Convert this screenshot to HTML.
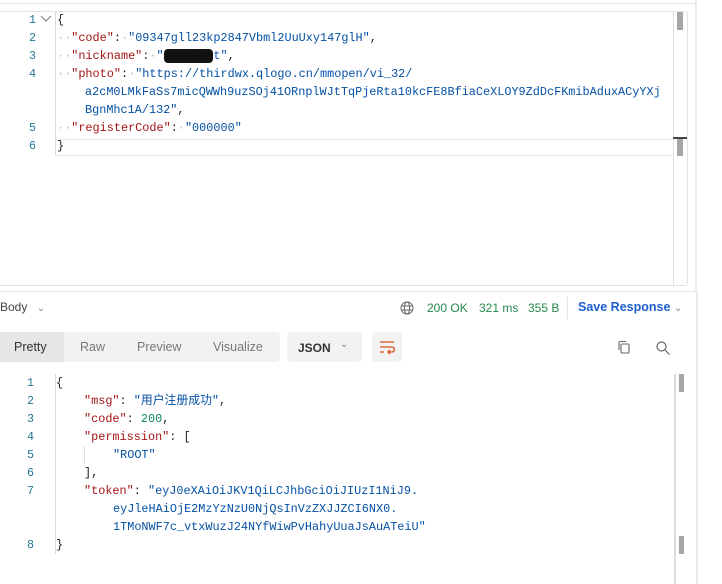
<!DOCTYPE html>
<html><head><meta charset="utf-8"><style>
*{margin:0;padding:0;box-sizing:border-box}
body{width:722px;height:584px;background:#fff;position:relative;overflow:hidden;font-family:"Liberation Sans","Noto Sans CJK SC",sans-serif}
.a{position:absolute}
.c{position:absolute;font-family:"Liberation Mono","Noto Sans CJK SC",monospace;font-size:11.85px;white-space:pre;line-height:18px;color:#222}
.n{position:absolute;font-family:"Liberation Mono",monospace;font-size:11.7px;color:#237893;width:36px;text-align:right;line-height:18px}
.k{color:#a31515}.s{color:#0451a5}.g{color:#098658}.d{color:#bbb}
</style></head><body>
<div class="a" style="left:0;top:3px;width:695px;height:1px;background:#e8e8e8"></div>
<div class="a" style="left:695px;top:0;width:2px;height:292px;background:#ebebeb"></div>
<div class="a" style="left:0;top:11px;width:688px;height:275px;border:1px solid #e2e2e2;border-left:none;border-radius:0 3px 3px 0"></div>
<div class="a" style="left:673px;top:12px;width:1px;height:273px;background:#ddd"></div>
<div class="a" style="left:677px;top:12px;width:6px;height:18px;background:#a6a6a6"></div>
<div class="a" style="left:677px;top:139px;width:6px;height:17px;background:#a6a6a6"></div>
<div class="a" style="left:673px;top:137px;width:14px;height:2px;background:#444"></div>
<div class="a" style="left:56px;top:139px;width:617px;height:17px;border-top:1px solid #e8e8e8;border-bottom:1px solid #e8e8e8"></div>
<div class="a" style="left:55px;top:12px;width:1px;height:143px;background:#d8d8d8"></div>
<div class="a" style="left:0;top:291px;width:695px;height:1px;background:#e8e8e8"></div>

<div class="n" style="top:11px">1</div><div class="n" style="top:29px">2</div><div class="n" style="top:47px">3</div><div class="n" style="top:65px">4</div><div class="n" style="top:119px">5</div><div class="n" style="top:137px">6</div>
<svg class="a" style="left:40px;top:15px" width="12" height="8"><path d="M1 1l5 5 5-5" fill="none" stroke="#888" stroke-width="1.2"/></svg>
<div class="c" style="left:57px;top:11px">{</div>
<div class="c" style="left:57px;top:29px"><span class="d">··</span><span class="k">"code"</span>:<span class="d">·</span><span class="s">"09347gll23kp2847Vbml2UuUxy147glH"</span>,</div>
<div class="c" style="left:57px;top:47px"><span class="d">··</span><span class="k">"nickname"</span>:<span class="d">·</span><span class="s">"<span style="background:#111;color:#111;border-radius:4px">gxxxlxx</span>t"</span>,</div>
<div class="c" style="left:57px;top:65px"><span class="d">··</span><span class="k">"photo"</span>:<span class="d">·</span><span class="s">"https://thirdwx.qlogo.cn/mmopen/vi_32/</span></div>
<div class="c s" style="left:85px;top:83px">a2cM0LMkFaSs7micQWWh9uzSOj41ORnplWJtTqPjeRta10kcFE8BfiaCeXLOY9ZdDcFKmibAduxACyYXj</div>
<div class="c" style="left:85px;top:101px"><span class="s">BgnMhc1A/132"</span>,</div>
<div class="c" style="left:57px;top:119px"><span class="d">··</span><span class="k">"registerCode"</span>:<span class="d">·</span><span class="s">"000000"</span></div>
<div class="c" style="left:57px;top:137px">}</div>

<div class="a" style="left:0;top:300px;font-size:12px;color:#444">Body <span style="color:#888;font-size:10px;margin-left:6px">&#8964;</span></div>
<svg class="a" style="left:400px;top:301px" width="14" height="14" viewBox="0 0 14 14" fill="none" stroke="#666" stroke-width="1"><circle cx="7" cy="7" r="6"/><ellipse cx="7" cy="7" rx="2.6" ry="6"/><path d="M1 5h12M1 9h12"/></svg>
<div class="a" style="left:427px;top:301px;font-size:12px;color:#238a4e">200 OK</div>
<div class="a" style="left:479px;top:301px;font-size:12px;color:#238a4e">321 ms</div>
<div class="a" style="left:528px;top:301px;font-size:12px;color:#238a4e">355 B</div>
<div class="a" style="left:567px;top:297px;width:1px;height:22px;background:#e4e4e4"></div>
<div class="a" style="left:578px;top:300px;font-size:12.5px;color:#1d5fd0;font-weight:bold">Save Response <span style="color:#888;font-weight:normal;font-size:10px">&#8964;</span></div>

<div class="a" style="left:0;top:332px;width:280px;height:30px;background:#f2f2f2;border-radius:0 4px 4px 0"></div>
<div class="a" style="left:0;top:332px;width:64px;height:30px;background:#e6e6e6"></div>
<div class="a" style="left:14px;top:340px;font-size:12.5px;color:#333">Pretty</div>
<div class="a" style="left:80px;top:340px;font-size:12.5px;color:#777">Raw</div>
<div class="a" style="left:137px;top:340px;font-size:12.5px;color:#777">Preview</div>
<div class="a" style="left:213px;top:340px;font-size:12.5px;color:#777">Visualize</div>
<div class="a" style="left:287px;top:332px;width:75px;height:30px;background:#f2f2f2;border-radius:4px"></div>
<div class="a" style="left:298px;top:341px;font-size:12px;color:#333;font-weight:bold">JSON</div>
<div class="a" style="left:340px;top:339px;font-size:10px;color:#888">&#8964;</div>
<div class="a" style="left:372px;top:332px;width:30px;height:30px;background:#f2f2f2;border-radius:4px"></div>
<svg class="a" style="left:378px;top:339px" width="18" height="16" viewBox="0 0 18 16" fill="none" stroke="#e0501a" stroke-width="1.3"><path d="M2 3h14M2 8h12a2.5 2.5 0 0 1 0 5H10M12 11l-2 2 2 2M2 13h4"/></svg>
<svg class="a" style="left:616px;top:339px" width="16" height="16" viewBox="0 0 16 16" fill="none" stroke="#666" stroke-width="1.1"><rect x="5" y="5" width="8" height="9" rx="1"/><path d="M3 11V3.5a1 1 0 0 1 1-1h6"/></svg>
<svg class="a" style="left:655px;top:340px" width="16" height="16" viewBox="0 0 16 16" fill="none" stroke="#666" stroke-width="1.2"><circle cx="6.5" cy="6.5" r="4.5"/><path d="M10 10l4.5 4.5"/></svg>

<div class="a" style="left:696px;top:292px;width:2px;height:292px;background:#ebebeb"></div>
<div class="a" style="left:674px;top:374px;width:2px;height:210px;background:#dcdcdc"></div>
<div class="a" style="left:679px;top:374px;width:5px;height:18px;background:#a6a6a6"></div>
<div class="a" style="left:679px;top:536px;width:5px;height:18px;background:#a6a6a6"></div>
<div class="a" style="left:55px;top:374px;width:1px;height:180px;background:#d8d8d8"></div>
<div class="a" style="left:84px;top:446px;width:1px;height:18px;background:#ddd"></div>

<div class="n" style="left:-2px;top:374px">1</div><div class="n" style="left:-2px;top:392px">2</div><div class="n" style="left:-2px;top:410px">3</div><div class="n" style="left:-2px;top:428px">4</div><div class="n" style="left:-2px;top:446px">5</div><div class="n" style="left:-2px;top:464px">6</div><div class="n" style="left:-2px;top:482px">7</div><div class="n" style="left:-2px;top:536px">8</div>
<div class="c" style="left:56px;top:374px">{</div>
<div class="c" style="left:84px;top:392px"><span class="k">"msg"</span>: <span class="s">"用户注册成功"</span>,</div>
<div class="c" style="left:84px;top:410px"><span class="k">"code"</span>: <span class="g">200</span>,</div>
<div class="c" style="left:84px;top:428px"><span class="k">"permission"</span>: [</div>
<div class="c s" style="left:113px;top:446px">"ROOT"</div>
<div class="c" style="left:84px;top:464px">],</div>
<div class="c" style="left:84px;top:482px"><span class="k">"token"</span>: <span class="s">"eyJ0eXAiOiJKV1QiLCJhbGciOiJIUzI1NiJ9.</span></div>
<div class="c s" style="left:113px;top:500px">eyJleHAiOjE2MzYzNzU0NjQsInVzZXJJZCI6NX0.</div>
<div class="c s" style="left:113px;top:518px">1TMoNWF7c_vtxWuzJ24NYfWiwPvHahyUuaJsAuATeiU"</div>
<div class="c" style="left:56px;top:536px">}</div>
</body></html>
